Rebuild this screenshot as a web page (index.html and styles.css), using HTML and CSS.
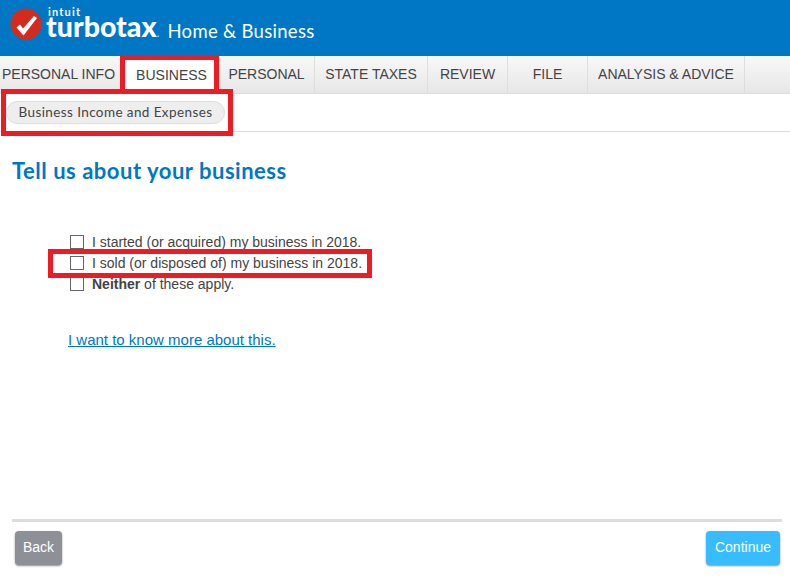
FILE: index.html
```html
<!DOCTYPE html>
<html lang="en">
  <head>
    <meta charset="UTF-8" />
    <title>TurboTax Home &amp; Business</title>
    <link rel="stylesheet" href="styles.css">
  </head>
  <body>
    <div class="header">
      <svg class="check-logo" width="32" height="32" viewBox="0 0 32 32">
        <circle cx="16" cy="16" r="15.5" fill="#d52b1e" />
        <path d="M6.5 19.5 L10 16.5 L13 20.5 L24 8 L27 10 L13.5 27.5 Z" fill="#fff" />
      </svg>
      <div class="brand">
        <div class="intuit">intuit</div>
        <div class="turbotax">turbotax<span class="dot">.</span></div>
      </div>
      <div class="product">Home &amp; Business</div>
    </div>

    <div class="navbar">
      <a href="#" class="tab tab-info">PERSONAL INFO</a>
      <a href="#" class="tab tab-business active">BUSINESS</a>
      <a href="#" class="tab tab-personal">PERSONAL</a>
      <a href="#" class="tab tab-state">STATE TAXES</a>
      <a href="#" class="tab tab-review">REVIEW</a>
      <a href="#" class="tab tab-file">FILE</a>
      <a href="#" class="tab tab-advice">ANALYSIS &amp; ADVICE</a>
    </div>

    <div class="subnav">
      <span class="pill">Business Income and Expenses</span>
    </div>

    <div class="content">
      <h1>Tell us about your business</h1>
      <div class="options">
        <label class="option"><span class="box"></span>I started (or acquired) my business in 2018.</label>
        <label class="option"><span class="box"></span>I sold (or disposed of) my business in 2018.</label>
        <label class="option"><span class="box"></span><span><b>Neither</b> of these apply.</span></label>
      </div>
      <a href="#" class="more">I want to know more about this.</a>
    </div>

    <div class="footer">
      <button class="btn btn-back">Back</button>
      <button class="btn btn-continue">Continue</button>
    </div>

    <!-- red annotation boxes drawn over the page -->
    <div class="mark mark-tab"></div>
    <div class="mark mark-pill"></div>
    <div class="mark mark-option"></div>
  </body>
</html>
```

FILE: styles.css
```css
html,
body {
  height: 100%;
}

body {
  position: relative;
  margin: 0;
  padding: 0;
  height: 578px;
  overflow: hidden;
  display: flex;
  flex-direction: column;
  background-color: #fff;
  color: #444;
  font-family: "Liberation Sans", Arial, sans-serif;
  font-size: 14px;
}

.header {
  flex: none;
  height: 56px;
  background-color: #0077c5;
  color: #fff;
  display: flex;
  align-items: flex-start;
  padding-left: 10px;
  box-sizing: border-box;
}

.check-logo {
  margin-top: 8px;
  flex: none;
}

.brand {
  margin-left: 4px;
  padding-top: 6px;
  font-family: "Lato", sans-serif;
  font-weight: 700;
}

.intuit {
  font-size: 11px;
  line-height: 11px;
  letter-spacing: 1.2px;
  margin-left: 2px;
}

.turbotax {
  font-size: 28.5px;
  line-height: 19px;
  font-weight: 900;
}

.dot {
  font-size: 12px;
  font-weight: 400;
  opacity: 0.7;
}

.product {
  margin-left: 8px;
  margin-top: 20px;
  font-family: "Lato", sans-serif;
  font-size: 18.5px;
  line-height: 22px;
  letter-spacing: 0.3px;
}

.navbar {
  flex: none;
  height: 38px;
  display: flex;
  background: linear-gradient(#f8f8f8, #e6e6e6);
  box-shadow: inset 0 -1px 0 #ddd;
}

.tab {
  box-sizing: border-box;
  height: 38px;
  line-height: 36px;
  text-align: center;
  text-decoration: none;
  color: #444;
  white-space: nowrap;
  border-right: 1px solid #ddd;
}

.tab-info { width: 122px; padding-left: 2px; text-align: left; border-right: none; }
.tab-business { width: 97px; padding-left: 2px; background: #fff; border-right: none; line-height: 38px; }
.tab-personal { width: 96px; }
.tab-state { width: 113px; }
.tab-review { width: 80px; }
.tab-file { width: 80px; }
.tab-advice { width: 157px; }

.subnav {
  flex: none;
  height: 38px;
  box-sizing: border-box;
  border-bottom: 1px solid #ddd;
  padding: 7px 0 0 6px;
}

.pill {
  display: inline-block;
  box-sizing: border-box;
  height: 23px;
  width: 219px;
  line-height: 21px;
  text-align: center;
  font-family: "Lato", sans-serif;
  font-size: 13.5px;
  letter-spacing: 0.4px;
  color: #444;
  background-color: #eee;
  border: 1px solid #ddd;
  border-radius: 12px;
}

.content {
  flex: 1;
  padding: 25px 12px 0;
}

h1 {
  margin: 0;
  font-family: "Lato", sans-serif;
  font-size: 22px;
  line-height: 28px;
  font-weight: 700;
  letter-spacing: 0.52px;
  color: #0077c5;
}

.options {
  margin-top: 46px;
  margin-left: 58px;
  display: flex;
  flex-direction: column;
}

.option {
  display: flex;
  align-items: center;
  height: 21px;
}

.box {
  flex: none;
  box-sizing: border-box;
  width: 14px;
  height: 14px;
  margin-right: 8px;
  background-color: #fff;
  border: 1px solid #666;
}

.more {
  display: inline-block;
  margin-top: 37px;
  margin-left: 56px;
  color: #0077c5;
  font-size: 15px;
  line-height: 17px;
}

.footer {
  flex: none;
  height: 59px;
  margin: 0 8px 0 12px;
  box-sizing: border-box;
  border-top: 3px solid #ddd;
  padding: 9px 2px 0 3px;
  display: flex;
  justify-content: space-between;
  align-items: flex-start;
}

.btn {
  height: 34px;
  border: none;
  border-radius: 4px;
  color: #fff;
  font-family: "Liberation Sans", Arial, sans-serif;
  font-size: 14px;
  padding: 0 0 2px;
  box-shadow: 0 1px 2px rgba(0, 0, 0, 0.45);
}

.btn-back {
  width: 47px;
  background-color: #8d9096;
}

.btn-continue {
  width: 74px;
  background-color: #37bdff;
}

.mark {
  position: absolute;
  box-sizing: border-box;
  border: 5px solid #ed1c24;
}

.mark-tab {
  left: 120px;
  top: 55px;
  width: 99px;
  height: 39px;
}

.mark-pill {
  left: 1px;
  top: 89px;
  width: 232px;
  height: 47px;
}

.mark-option {
  left: 48px;
  top: 249px;
  width: 324px;
  height: 29px;
}
```
